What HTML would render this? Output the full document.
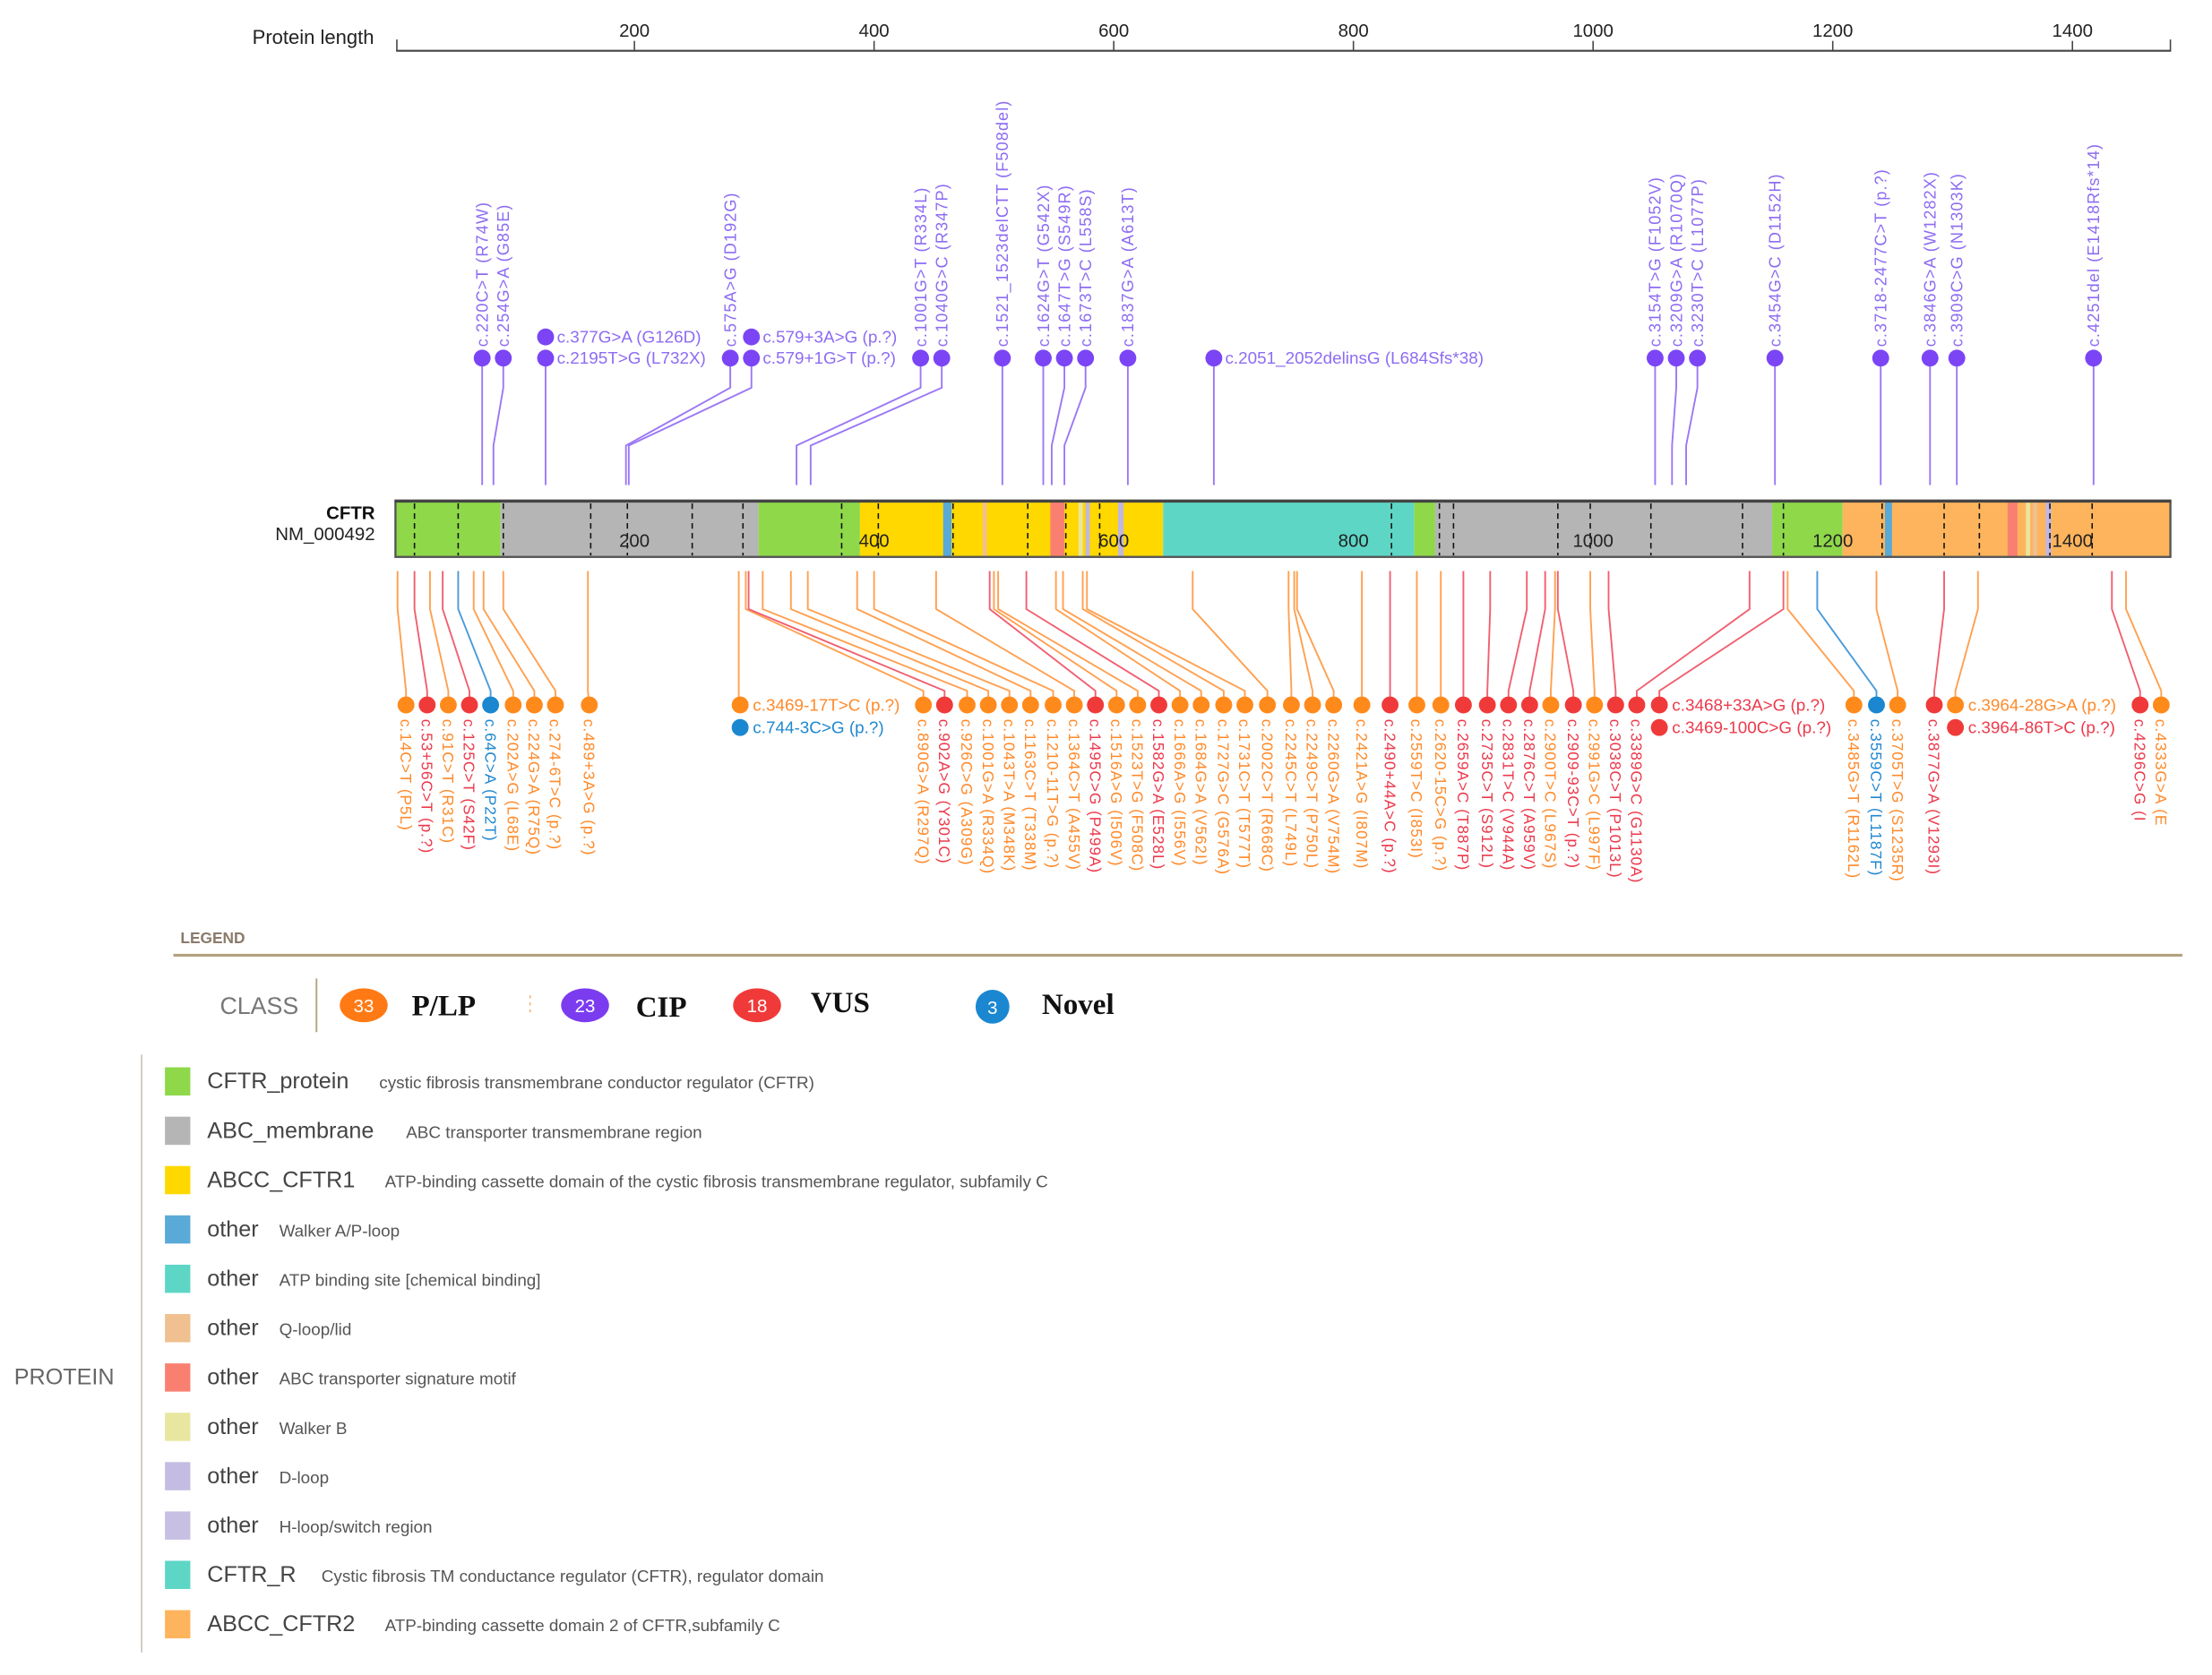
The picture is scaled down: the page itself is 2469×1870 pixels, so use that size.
<!DOCTYPE html>
<html><head><meta charset="utf-8"><style>
html,body{margin:0;padding:0;background:#fff;}
svg{display:block;}
text{font-family:"Liberation Sans",sans-serif;}
.tp{font-size:11.5px;fill:#8d6cf2;letter-spacing:0.7px;}
.th{font-size:12px;fill:#8d6cf2;}
.bo{font-size:11px;fill:#ff8a2a;letter-spacing:0.6px;}
.br{font-size:11px;fill:#ec3a4c;letter-spacing:0.6px;}
.bb{font-size:11px;fill:#1f88d0;letter-spacing:0.6px;}
.ho{font-size:12px;fill:#ff8a2a;}
.hr{font-size:12px;fill:#ec3a4c;}
.hb{font-size:12px;fill:#1f88d0;}
.ln{font-size:16px;fill:#444;}
.ld{font-size:12px;fill:#555;}
</style></head><body>
<svg width="2469" height="1870" viewBox="0 0 1569 1188" preserveAspectRatio="none" xmlns="http://www.w3.org/2000/svg">
<!-- axis -->
<text x="179" y="31" font-size="14" fill="#222">Protein length</text>
<line x1="281" y1="36" x2="1540" y2="36" stroke="#444" stroke-width="1.3"/>
<line x1="281.5" y1="28" x2="281.5" y2="36" stroke="#444"/>
<line x1="1539.5" y1="28" x2="1539.5" y2="36" stroke="#444"/>
<g stroke="#444"><line x1="450" y1="29" x2="450" y2="36"/><line x1="620" y1="29" x2="620" y2="36"/><line x1="790" y1="29" x2="790" y2="36"/><line x1="960" y1="29" x2="960" y2="36"/><line x1="1130" y1="29" x2="1130" y2="36"/><line x1="1300" y1="29" x2="1300" y2="36"/><line x1="1470" y1="29" x2="1470" y2="36"/></g>
<g font-size="13" fill="#222" text-anchor="middle"><text x="450" y="26">200</text><text x="620" y="26">400</text><text x="790" y="26">600</text><text x="960" y="26">800</text><text x="1130" y="26">1000</text><text x="1300" y="26">1200</text><text x="1470" y="26">1400</text></g>

<!-- top lines -->
<g fill="none" stroke="#9a78f5" stroke-width="1.2">
<polyline points="342,254 342,344"/>
<polyline points="357,254 357,275 350,316 350,344"/>
<polyline points="387,254 387,344"/>
<polyline points="518,254 518,275 444,316 444,344"/>
<polyline points="533,254 533,275 446,316 446,344"/>
<polyline points="653,254 653,275 565,316 565,344"/>
<polyline points="668,254 668,275 575,316 575,344"/>
<polyline points="711,254 711,344"/>
<polyline points="740,254 740,344"/>
<polyline points="755,254 755,275 746,316 746,344"/>
<polyline points="770,254 770,275 755,316 755,344"/>
<polyline points="800,254 800,344"/>
<polyline points="861,254 861,344"/>
<polyline points="1174,254 1174,344"/>
<polyline points="1189,254 1189,275 1186,316 1186,344"/>
<polyline points="1204,254 1204,275 1196,316 1196,344"/>
<polyline points="1259,254 1259,344"/>
<polyline points="1334,254 1334,344"/>
<polyline points="1369,254 1369,344"/>
<polyline points="1388,254 1388,344"/>
<polyline points="1485,254 1485,344"/>
</g>
<g fill="#7b45f5">
<circle cx="342" cy="254" r="6"/><circle cx="357" cy="254" r="6"/><circle cx="387" cy="239" r="6"/><circle cx="387" cy="254" r="6"/>
<circle cx="518" cy="254" r="6"/><circle cx="533" cy="239" r="6"/><circle cx="533" cy="254" r="6"/>
<circle cx="653" cy="254" r="6"/><circle cx="668" cy="254" r="6"/><circle cx="711" cy="254" r="6"/>
<circle cx="740" cy="254" r="6"/><circle cx="755" cy="254" r="6"/><circle cx="770" cy="254" r="6"/><circle cx="800" cy="254" r="6"/>
<circle cx="861" cy="254" r="6"/><circle cx="1174" cy="254" r="6"/><circle cx="1189" cy="254" r="6"/><circle cx="1204" cy="254" r="6"/>
<circle cx="1259" cy="254" r="6"/><circle cx="1334" cy="254" r="6"/><circle cx="1369" cy="254" r="6"/><circle cx="1388" cy="254" r="6"/><circle cx="1485" cy="254" r="6"/>
</g>
<g class="tp">
<text transform="translate(346,246) rotate(-90)">c.220C&gt;T (R74W)</text>
<text transform="translate(361,246) rotate(-90)">c.254G&gt;A (G85E)</text>
<text transform="translate(522,246) rotate(-90)">c.575A&gt;G (D192G)</text>
<text transform="translate(657,246) rotate(-90)">c.1001G&gt;T (R334L)</text>
<text transform="translate(672,246) rotate(-90)">c.1040G&gt;C (R347P)</text>
<text transform="translate(715,246) rotate(-90)">c.1521_1523delCTT (F508del)</text>
<text transform="translate(744,246) rotate(-90)">c.1624G&gt;T (G542X)</text>
<text transform="translate(759,246) rotate(-90)">c.1647T&gt;G (S549R)</text>
<text transform="translate(774,246) rotate(-90)">c.1673T&gt;C (L558S)</text>
<text transform="translate(804,246) rotate(-90)">c.1837G&gt;A (A613T)</text>
<text transform="translate(1178,246) rotate(-90)">c.3154T&gt;G (F1052V)</text>
<text transform="translate(1193,246) rotate(-90)">c.3209G&gt;A (R1070Q)</text>
<text transform="translate(1208,246) rotate(-90)">c.3230T&gt;C (L1077P)</text>
<text transform="translate(1263,246) rotate(-90)">c.3454G&gt;C (D1152H)</text>
<text transform="translate(1338,246) rotate(-90)">c.3718-2477C&gt;T (p.?)</text>
<text transform="translate(1373,246) rotate(-90)">c.3846G&gt;A (W1282X)</text>
<text transform="translate(1392,246) rotate(-90)">c.3909C&gt;G (N1303K)</text>
<text transform="translate(1489,246) rotate(-90)">c.4251del (E1418Rfs*14)</text>
</g>
<g class="th">
<text x="395" y="243">c.377G&gt;A (G126D)</text>
<text x="395" y="258">c.2195T&gt;G (L732X)</text>
<text x="541" y="243">c.579+3A&gt;G (p.?)</text>
<text x="541" y="258">c.579+1G&gt;T (p.?)</text>
<text x="869" y="258">c.2051_2052delinsG (L684Sfs*38)</text>
</g>

<!-- protein bar -->
<text x="266" y="368" font-size="13" font-weight="bold" fill="#111" text-anchor="end">CFTR</text>
<text x="266" y="383" font-size="13" fill="#222" text-anchor="end">NM_000492</text>
<g>
<rect x="280" y="355" width="75" height="40" fill="#8ed84a"/>
<rect x="355" y="355" width="183" height="40" fill="#b5b5b5"/>
<rect x="538" y="355" width="72" height="40" fill="#8ed84a"/>
<rect x="610" y="355" width="215" height="40" fill="#ffd800"/>
<rect x="825" y="355" width="178" height="40" fill="#5ed6c6"/>
<rect x="1003" y="355" width="15" height="40" fill="#8ed84a"/>
<rect x="1018" y="355" width="239" height="40" fill="#b5b5b5"/>
<rect x="1257" y="355" width="50" height="40" fill="#8ed84a"/>
<rect x="1307" y="355" width="233" height="40" fill="#feb45c"/>
<rect x="669" y="355" width="6" height="40" fill="#5aaad8"/>
<rect x="697" y="355" width="3" height="40" fill="#f0c090"/>
<rect x="745" y="355" width="10" height="40" fill="#f98070"/>
<rect x="765" y="355" width="3" height="40" fill="#e8e6a0"/>
<rect x="770" y="355" width="3" height="40" fill="#c0b8e0"/>
<rect x="793" y="355" width="4" height="40" fill="#c0b8e0"/>
<rect x="1337" y="355" width="5" height="40" fill="#5aaad8"/>
<rect x="1424" y="355" width="7" height="40" fill="#f98070"/>
<rect x="1437" y="355" width="3" height="40" fill="#e8e6a0"/>
<rect x="1442" y="355" width="3" height="40" fill="#f0c090"/>
<rect x="1451" y="355" width="4" height="40" fill="#c0b8e0"/>
</g>
<g stroke="#111" stroke-width="1" stroke-dasharray="4,3">
<line x1="294" y1="357" x2="294" y2="394"/><line x1="325" y1="357" x2="325" y2="394"/><line x1="357" y1="357" x2="357" y2="394"/><line x1="419" y1="357" x2="419" y2="394"/><line x1="445" y1="357" x2="445" y2="394"/><line x1="491" y1="357" x2="491" y2="394"/><line x1="527" y1="357" x2="527" y2="394"/><line x1="597" y1="357" x2="597" y2="394"/><line x1="623" y1="357" x2="623" y2="394"/><line x1="676" y1="357" x2="676" y2="394"/><line x1="729" y1="357" x2="729" y2="394"/><line x1="756" y1="357" x2="756" y2="394"/><line x1="780" y1="357" x2="780" y2="394"/>
<line x1="987" y1="357" x2="987" y2="394"/><line x1="1021" y1="357" x2="1021" y2="394"/><line x1="1031" y1="357" x2="1031" y2="394"/><line x1="1105" y1="357" x2="1105" y2="394"/><line x1="1128" y1="357" x2="1128" y2="394"/><line x1="1171" y1="357" x2="1171" y2="394"/><line x1="1236" y1="357" x2="1236" y2="394"/><line x1="1265" y1="357" x2="1265" y2="394"/><line x1="1335" y1="357" x2="1335" y2="394"/><line x1="1379" y1="357" x2="1379" y2="394"/><line x1="1404" y1="357" x2="1404" y2="394"/><line x1="1454" y1="357" x2="1454" y2="394"/><line x1="1484" y1="357" x2="1484" y2="394"/>
</g>
<rect x="280.5" y="355" width="1259" height="40" fill="none" stroke="#555" stroke-width="1.5"/>
<line x1="280" y1="355.5" x2="1540" y2="355.5" stroke="#444" stroke-width="2"/>
<g font-size="13" fill="#222" text-anchor="middle"><text x="450" y="388">200</text><text x="620" y="388">400</text><text x="790" y="388">600</text><text x="960" y="388">800</text><text x="1130" y="388">1000</text><text x="1300" y="388">1200</text><text x="1470" y="388">1400</text></g>

<!-- bottom lines -->
<g fill="none" stroke-width="1.2">
<g stroke="#ffa050">
<polyline points="282,405 282,432 288,490 288,500"/>
<polyline points="305,405 305,432 318,490 318,500"/>
<polyline points="336,405 336,432 364,490 364,500"/>
<polyline points="343,405 343,432 379,490 379,500"/>
<polyline points="357,405 357,432 394,490 394,500"/>
<polyline points="417,405 417,490 418,500"/>
<polyline points="524,405 524,500"/>
<polyline points="529,405 529,432 655,490 655,500"/>
<polyline points="541,405 541,432 686,490 686,500"/>
<polyline points="561,405 561,432 701,490 701,500"/>
<polyline points="573,405 573,432 716,490 716,500"/>
<polyline points="608,405 608,432 731,490 731,500"/>
<polyline points="620,405 620,432 747,490 747,500"/>
<polyline points="664,405 664,432 762,490 762,500"/>
<polyline points="705,405 705,432 792,490 792,500"/>
<polyline points="708,405 708,432 807,490 807,500"/>
<polyline points="749,405 749,432 837,490 837,500"/>
<polyline points="754,405 754,432 852,490 852,500"/>
<polyline points="768,405 768,432 868,490 868,500"/>
<polyline points="771,405 771,432 883,490 883,500"/>
<polyline points="846,405 846,432 899,490 899,500"/>
<polyline points="914,405 914,432 916,490 916,500"/>
<polyline points="918,405 918,432 931,490 931,500"/>
<polyline points="920,405 920,432 946,490 946,500"/>
<polyline points="966,405 966,500"/>
<polyline points="1005,405 1005,500"/>
<polyline points="1022,405 1022,500"/>
<polyline points="1103,405 1103,432 1100,490 1100,500"/>
<polyline points="1128,405 1128,432 1131,490 1131,500"/>
<polyline points="1268,405 1268,432 1315,490 1315,500"/>
<polyline points="1331,405 1331,432 1346,490 1346,500"/>
<polyline points="1403,405 1403,432 1387,490 1387,500"/>
<polyline points="1508,405 1508,432 1533,490 1533,500"/>
</g>
<g stroke="#f06070">
<polyline points="294,405 294,432 303,490 303,500"/>
<polyline points="314,405 314,432 333,490 333,500"/>
<polyline points="531,405 531,432 670,490 670,500"/>
<polyline points="702,405 702,432 777,490 777,500"/>
<polyline points="728,405 728,432 822,490 822,500"/>
<polyline points="986,405 986,500"/>
<polyline points="1038,405 1038,500"/>
<polyline points="1057,405 1057,432 1055,490 1055,500"/>
<polyline points="1083,405 1083,432 1070,490 1070,500"/>
<polyline points="1096,405 1096,432 1085,490 1085,500"/>
<polyline points="1105,405 1105,432 1116,490 1116,500"/>
<polyline points="1141,405 1141,432 1146,490 1146,500"/>
<polyline points="1241,405 1241,432 1161,490 1161,500"/>
<polyline points="1265,405 1265,432 1177,490 1177,500"/>
<polyline points="1379,405 1379,432 1372,490 1372,500"/>
<polyline points="1498,405 1498,432 1518,490 1518,500"/>
</g>
<g stroke="#4a9ad8">
<polyline points="325,405 325,432 348,490 348,500"/>
<polyline points="1289,405 1289,432 1331,490 1331,500"/>
</g>
</g>
<g fill="#ff8a1c">
<circle cx="288" cy="500" r="6"/><circle cx="318" cy="500" r="6"/><circle cx="364" cy="500" r="6"/><circle cx="379" cy="500" r="6"/><circle cx="394" cy="500" r="6"/><circle cx="418" cy="500" r="6"/><circle cx="525" cy="500" r="6"/>
<circle cx="655" cy="500" r="6"/><circle cx="686" cy="500" r="6"/><circle cx="701" cy="500" r="6"/><circle cx="716" cy="500" r="6"/><circle cx="731" cy="500" r="6"/><circle cx="747" cy="500" r="6"/><circle cx="762" cy="500" r="6"/><circle cx="792" cy="500" r="6"/><circle cx="807" cy="500" r="6"/><circle cx="837" cy="500" r="6"/><circle cx="852" cy="500" r="6"/><circle cx="868" cy="500" r="6"/><circle cx="883" cy="500" r="6"/><circle cx="899" cy="500" r="6"/><circle cx="916" cy="500" r="6"/><circle cx="931" cy="500" r="6"/><circle cx="946" cy="500" r="6"/><circle cx="966" cy="500" r="6"/><circle cx="1005" cy="500" r="6"/><circle cx="1022" cy="500" r="6"/><circle cx="1100" cy="500" r="6"/><circle cx="1131" cy="500" r="6"/>
<circle cx="1315" cy="500" r="6"/><circle cx="1346" cy="500" r="6"/><circle cx="1387" cy="500" r="6"/><circle cx="1533" cy="500" r="6"/>
</g>
<g fill="#f03a3a">
<circle cx="303" cy="500" r="6"/><circle cx="333" cy="500" r="6"/><circle cx="670" cy="500" r="6"/><circle cx="777" cy="500" r="6"/><circle cx="822" cy="500" r="6"/><circle cx="986" cy="500" r="6"/><circle cx="1038" cy="500" r="6"/><circle cx="1055" cy="500" r="6"/><circle cx="1070" cy="500" r="6"/><circle cx="1085" cy="500" r="6"/><circle cx="1116" cy="500" r="6"/><circle cx="1146" cy="500" r="6"/><circle cx="1161" cy="500" r="6"/><circle cx="1177" cy="500" r="6"/><circle cx="1177" cy="516" r="6"/><circle cx="1372" cy="500" r="6"/><circle cx="1387" cy="516" r="6"/><circle cx="1518" cy="500" r="6"/>
</g>
<g fill="#1a87d0"><circle cx="348" cy="500" r="6"/><circle cx="525" cy="516" r="6"/><circle cx="1331" cy="500" r="6"/></g>

<g class="ho"><text x="534" y="504">c.3469-17T&gt;C (p.?)</text><text x="1186" y="504" class="hr">c.3468+33A&gt;G (p.?)</text><text x="1396" y="504">c.3964-28G&gt;A (p.?)</text></g>
<text x="534" y="520" class="hb">c.744-3C&gt;G (p.?)</text>
<text x="1186" y="520" class="hr">c.3469-100C&gt;G (p.?)</text>
<text x="1396" y="520" class="hr">c.3964-86T&gt;C (p.?)</text>

<g class="bo">
<text transform="translate(284,510) rotate(90)">c.14C&gt;T (P5L)</text>
<text transform="translate(314,510) rotate(90)">c.91C&gt;T (R31C)</text>
<text transform="translate(360,510) rotate(90)">c.202A&gt;G (L68E)</text>
<text transform="translate(375,510) rotate(90)">c.224G&gt;A (R75Q)</text>
<text transform="translate(390,510) rotate(90)">c.274-6T&gt;C (p.?)</text>
<text transform="translate(414,510) rotate(90)">c.489+3A&gt;G (p.?)</text>
<text transform="translate(651,510) rotate(90)">c.890G&gt;A (R297Q)</text>
<text transform="translate(682,510) rotate(90)">c.926C&gt;G (A309G)</text>
<text transform="translate(697,510) rotate(90)">c.1001G&gt;A (R334Q)</text>
<text transform="translate(712,510) rotate(90)">c.1043T&gt;A (M348K)</text>
<text transform="translate(727,510) rotate(90)">c.1163C&gt;T (T338M)</text>
<text transform="translate(743,510) rotate(90)">c.1210-11T&gt;G (p.?)</text>
<text transform="translate(758,510) rotate(90)">c.1364C&gt;T (A455V)</text>
<text transform="translate(788,510) rotate(90)">c.1516A&gt;G (I506V)</text>
<text transform="translate(803,510) rotate(90)">c.1523T&gt;G (F508C)</text>
<text transform="translate(833,510) rotate(90)">c.1666A&gt;G (I556V)</text>
<text transform="translate(848,510) rotate(90)">c.1684G&gt;A (V562I)</text>
<text transform="translate(864,510) rotate(90)">c.1727G&gt;C (G576A)</text>
<text transform="translate(879,510) rotate(90)">c.1731C&gt;T (T577T)</text>
<text transform="translate(895,510) rotate(90)">c.2002C&gt;T (R668C)</text>
<text transform="translate(912,510) rotate(90)">c.2245C&gt;T (L749L)</text>
<text transform="translate(927,510) rotate(90)">c.2249C&gt;T (P750L)</text>
<text transform="translate(942,510) rotate(90)">c.2260G&gt;A (V754M)</text>
<text transform="translate(962,510) rotate(90)">c.2421A&gt;G (I807M)</text>
<text transform="translate(1001,510) rotate(90)">c.2559T&gt;C (I853I)</text>
<text transform="translate(1018,510) rotate(90)">c.2620-15C&gt;G (p.?)</text>
<text transform="translate(1096,510) rotate(90)">c.2900T&gt;C (L967S)</text>
<text transform="translate(1127,510) rotate(90)">c.2991G&gt;C (L997F)</text>
<text transform="translate(1311,510) rotate(90)">c.3485G&gt;T (R1162L)</text>
<text transform="translate(1342,510) rotate(90)">c.3705T&gt;G (S1235R)</text>
<text transform="translate(1529,510) rotate(90)">c.4333G&gt;A (E</text>
</g>
<g class="br">
<text transform="translate(299,510) rotate(90)">c.53+56C&gt;T (p.?)</text>
<text transform="translate(329,510) rotate(90)">c.125C&gt;T (S42F)</text>
<text transform="translate(666,510) rotate(90)">c.902A&gt;G (Y301C)</text>
<text transform="translate(773,510) rotate(90)">c.1495C&gt;G (P499A)</text>
<text transform="translate(818,510) rotate(90)">c.1582G&gt;A (E528L)</text>
<text transform="translate(982,510) rotate(90)">c.2490+44A&gt;C (p.?)</text>
<text transform="translate(1034,510) rotate(90)">c.2659A&gt;C (T887P)</text>
<text transform="translate(1051,510) rotate(90)">c.2735C&gt;T (S912L)</text>
<text transform="translate(1066,510) rotate(90)">c.2831T&gt;C (V944A)</text>
<text transform="translate(1081,510) rotate(90)">c.2876C&gt;T (A959V)</text>
<text transform="translate(1112,510) rotate(90)">c.2909-93C&gt;T (p.?)</text>
<text transform="translate(1142,510) rotate(90)">c.3038C&gt;T (P1013L)</text>
<text transform="translate(1157,510) rotate(90)">c.3389G&gt;C (G1130A)</text>
<text transform="translate(1368,510) rotate(90)">c.3877G&gt;A (V1293I)</text>
<text transform="translate(1514,510) rotate(90)">c.4296C&gt;G (I</text>
</g>
<g class="bb">
<text transform="translate(344,510) rotate(90)">c.64C&gt;A (P22T)</text>
<text transform="translate(1327,510) rotate(90)">c.3559C&gt;T (L1187F)</text>
</g>

<!-- legend -->
<text x="128" y="669" font-size="11" font-weight="bold" fill="#8a7a6a">LEGEND</text>
<line x1="123" y1="677.5" x2="1548" y2="677.5" stroke="#b3a27f" stroke-width="2"/>
<text x="156" y="719" font-size="17" fill="#777">CLASS</text>
<line x1="224.5" y1="694" x2="224.5" y2="732" stroke="#b3a27f" stroke-width="1.2"/>
<ellipse cx="258" cy="713" rx="17" ry="12" fill="#ff7a14"/><text x="258" y="718" font-size="13" fill="#fff" text-anchor="middle">33</text>
<text x="292" y="720" font-size="21" font-weight="bold" fill="#111" style="font-family:'Liberation Serif',serif">P/LP</text>
<line x1="376" y1="706" x2="376" y2="720" stroke="#f0b070" stroke-dasharray="2,3"/>
<ellipse cx="415" cy="713" rx="17" ry="12" fill="#7b3cf0"/><text x="415" y="718" font-size="13" fill="#fff" text-anchor="middle">23</text>
<text x="451" y="721" font-size="21" font-weight="bold" fill="#111" style="font-family:'Liberation Serif',serif">CIP</text>
<ellipse cx="537" cy="713" rx="17" ry="12" fill="#f03a3a"/><text x="537" y="718" font-size="13" fill="#fff" text-anchor="middle">18</text>
<text x="575" y="718" font-size="21" font-weight="bold" fill="#111" style="font-family:'Liberation Serif',serif">VUS</text>
<ellipse cx="704" cy="714" rx="12" ry="12" fill="#1a87d0"/><text x="704" y="719" font-size="13" fill="#fff" text-anchor="middle">3</text>
<text x="739" y="719" font-size="21" font-weight="bold" fill="#111" style="font-family:'Liberation Serif',serif">Novel</text>

<line x1="100.5" y1="748" x2="100.5" y2="1172" stroke="#c8c0b8" stroke-width="1"/>
<text x="10" y="982" font-size="16" fill="#666">PROTEIN</text>
<g>
<rect x="117" y="757" width="18" height="20" fill="#8ed84a"/><text x="147" y="772" class="ln">CFTR_protein</text><text x="269" y="772" class="ld">cystic fibrosis transmembrane conductor regulator (CFTR)</text>
<rect x="117" y="792" width="18" height="20" fill="#b5b5b5"/><text x="147" y="807" class="ln">ABC_membrane</text><text x="288" y="807" class="ld">ABC transporter transmembrane region</text>
<rect x="117" y="827" width="18" height="20" fill="#ffd800"/><text x="147" y="842" class="ln">ABCC_CFTR1</text><text x="273" y="842" class="ld">ATP-binding cassette domain of the cystic fibrosis transmembrane regulator, subfamily C</text>
<rect x="117" y="862" width="18" height="20" fill="#5aaad8"/><text x="147" y="877" class="ln">other</text><text x="198" y="877" class="ld">Walker A/P-loop</text>
<rect x="117" y="897" width="18" height="20" fill="#5ed6c6"/><text x="147" y="912" class="ln">other</text><text x="198" y="912" class="ld">ATP binding site [chemical binding]</text>
<rect x="117" y="932" width="18" height="20" fill="#f0c090"/><text x="147" y="947" class="ln">other</text><text x="198" y="947" class="ld">Q-loop/lid</text>
<rect x="117" y="967" width="18" height="20" fill="#f98070"/><text x="147" y="982" class="ln">other</text><text x="198" y="982" class="ld">ABC transporter signature motif</text>
<rect x="117" y="1002" width="18" height="20" fill="#e8e6a0"/><text x="147" y="1017" class="ln">other</text><text x="198" y="1017" class="ld">Walker B</text>
<rect x="117" y="1037" width="18" height="20" fill="#c4bce2"/><text x="147" y="1052" class="ln">other</text><text x="198" y="1052" class="ld">D-loop</text>
<rect x="117" y="1072" width="18" height="20" fill="#c8c0e2"/><text x="147" y="1087" class="ln">other</text><text x="198" y="1087" class="ld">H-loop/switch region</text>
<rect x="117" y="1107" width="18" height="20" fill="#5ed6c6"/><text x="147" y="1122" class="ln">CFTR_R</text><text x="228" y="1122" class="ld">Cystic fibrosis TM conductance regulator (CFTR), regulator domain</text>
<rect x="117" y="1142" width="18" height="20" fill="#feb45c"/><text x="147" y="1157" class="ln">ABCC_CFTR2</text><text x="273" y="1157" class="ld">ATP-binding cassette domain 2 of CFTR,subfamily C</text>
</g>
</svg>
</body></html>
